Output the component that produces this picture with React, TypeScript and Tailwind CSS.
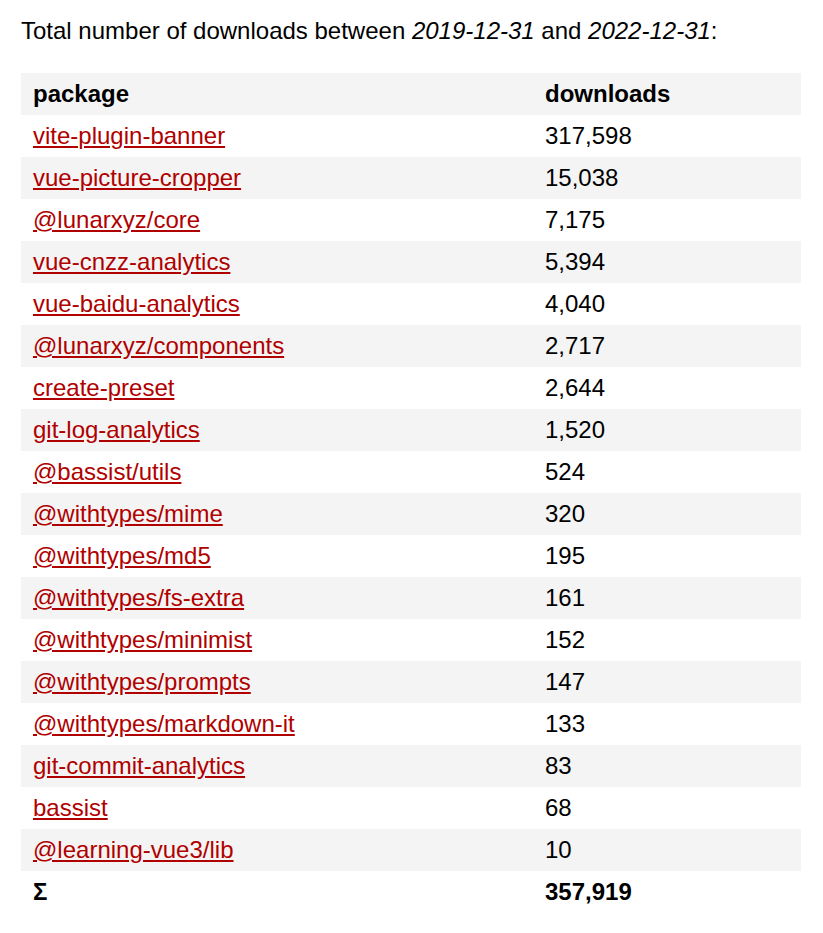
import React from 'react';

interface Row {
  name: string;
  downloads: string;
}

const rows: Row[] = [
  { name: 'vite-plugin-banner', downloads: '317,598' },
  { name: 'vue-picture-cropper', downloads: '15,038' },
  { name: '@lunarxyz/core', downloads: '7,175' },
  { name: 'vue-cnzz-analytics', downloads: '5,394' },
  { name: 'vue-baidu-analytics', downloads: '4,040' },
  { name: '@lunarxyz/components', downloads: '2,717' },
  { name: 'create-preset', downloads: '2,644' },
  { name: 'git-log-analytics', downloads: '1,520' },
  { name: '@bassist/utils', downloads: '524' },
  { name: '@withtypes/mime', downloads: '320' },
  { name: '@withtypes/md5', downloads: '195' },
  { name: '@withtypes/fs-extra', downloads: '161' },
  { name: '@withtypes/minimist', downloads: '152' },
  { name: '@withtypes/prompts', downloads: '147' },
  { name: '@withtypes/markdown-it', downloads: '133' },
  { name: 'git-commit-analytics', downloads: '83' },
  { name: 'bassist', downloads: '68' },
  { name: '@learning-vue3/lib', downloads: '10' },
];

const App: React.FC = () => {
  return (
    <div className="bg-white min-h-[933px] px-[21px] pt-[17px] text-[24px] leading-[28px] text-black font-['Liberation_Sans',Arial,sans-serif]">
      <p>
        Total number of downloads between <em>2019-12-31</em> and <em>2022-12-31</em>:
      </p>

      <table className="mt-[28px] w-[780px] border-collapse">
        <thead>
          <tr className="bg-[#f4f4f4] h-[42px]">
            <th className="w-[512px] px-[12px] text-left font-bold">package</th>
            <th className="px-[12px] text-left font-bold">downloads</th>
          </tr>
        </thead>
        <tbody>
          {rows.map((row, i) => (
            <tr key={row.name} className={`h-[42px] ${i % 2 === 1 ? 'bg-[#f4f4f4]' : 'bg-white'}`}>
              <td className="px-[12px]">
                <a href="#" className="text-[#b00000] underline">
                  {row.name}
                </a>
              </td>
              <td className="px-[12px]">{row.downloads}</td>
            </tr>
          ))}
          <tr className="h-[42px] bg-white">
            <td className="px-[12px] font-bold">Σ</td>
            <td className="px-[12px] font-bold">357,919</td>
          </tr>
        </tbody>
      </table>
    </div>
  );
};

export default App;
